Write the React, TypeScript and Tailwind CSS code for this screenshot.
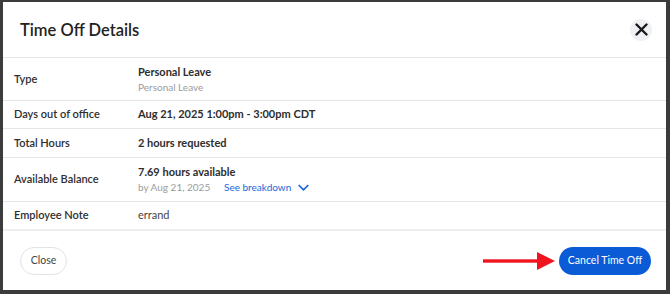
import React from "react";

export default function App() {
  return (
    <div
      className="w-[670px] h-[294px] bg-[#3b3b3b] pl-[3px] pt-[2px] pr-[4px] pb-[4px] overflow-hidden"
      style={{ fontFamily: "Lato, 'Open Sans', sans-serif" }}
    >
      <div className="w-full h-full bg-white flex flex-col text-[#2e2e2e]">
        <div className="h-[56px] shrink-0 flex items-center justify-between pl-[17px] pr-[14px] border-b border-[#e6e6e6]">
          <h1 className="text-[16.5px] font-semibold text-[#222] mt-[1px]">Time Off Details</h1>
          <button className="w-[22px] h-[22px] rounded-full bg-[#eff0f3] flex items-center justify-center">
            <svg width="13" height="13" viewBox="0 0 13 13">
              <path d="M1.5 1.5 L11.5 11.5 M11.5 1.5 L1.5 11.5" stroke="#1a1a1a" strokeWidth="2.4" strokeLinecap="round" />
            </svg>
          </button>
        </div>
        <div className="flex flex-col text-[11px]">
          <div className="h-[43px] flex items-center border-b border-[#e6e6e6]">
            <div className="w-[135px] pl-[11px] font-semibold">Type</div>
            <div className="flex flex-col">
              <div className="font-bold leading-[15px]">Personal Leave</div>
              <div className="text-[10px] text-[#9b9b9b] leading-[15px] mt-[1px]">Personal Leave</div>
            </div>
          </div>
          <div className="h-[28px] flex items-center border-b border-[#e6e6e6]">
            <div className="w-[135px] pl-[11px] font-semibold">Days out of office</div>
            <div className="font-bold">Aug 21, 2025 1:00pm - 3:00pm CDT</div>
          </div>
          <div className="h-[29px] flex items-center border-b border-[#e6e6e6]">
            <div className="w-[135px] pl-[11px] font-semibold">Total Hours</div>
            <div className="font-bold">2 hours requested</div>
          </div>
          <div className="h-[44px] flex items-center border-b border-[#e6e6e6]">
            <div className="w-[135px] pl-[11px] font-semibold">Available Balance</div>
            <div className="flex flex-col">
              <div className="font-bold leading-[15px]">7.69 hours available</div>
              <div className="flex items-center leading-[15px] mt-[1px] text-[10px]">
                <span className="text-[#9b9b9b] w-[86px]">by Aug 21, 2025</span>
                <span className="text-[#1a66db]">See breakdown</span>
                <svg width="11" height="8" viewBox="0 0 11 8" className="ml-[7px]">
                  <path d="M1.2 1.5 L5.5 5.8 L9.8 1.5" fill="none" stroke="#1a66db" strokeWidth="1.7" strokeLinecap="round" strokeLinejoin="round" />
                </svg>
              </div>
            </div>
          </div>
          <div className="h-[29px] flex items-center border-b-2 border-[#eeeeee]">
            <div className="w-[135px] pl-[11px] font-semibold">Employee Note</div>
            <div className="text-[#444]">errand</div>
          </div>
        </div>
        <div className="flex-1 flex items-center justify-between pl-[17px] pr-[15px] pt-[1px]">
          <button className="h-[28px] w-[47px] flex items-center justify-center rounded-full border border-[#e3e3e3] text-[10.5px] text-[#444]">Close</button>
          <div className="flex items-center">
            <svg width="74" height="20" viewBox="0 0 74 20" className="mr-[2px]">
              <rect x="0" y="8.3" width="56" height="3.4" fill="#f0141e" />
              <path d="M54 1 L72 10 L54 19 Z" fill="#f0141e" />
            </svg>
            <button className="h-[28px] w-[92px] flex items-center justify-center rounded-full bg-[#0b5bd6] text-white text-[10.5px]">Cancel Time Off</button>
          </div>
        </div>
      </div>
    </div>
  );
}
